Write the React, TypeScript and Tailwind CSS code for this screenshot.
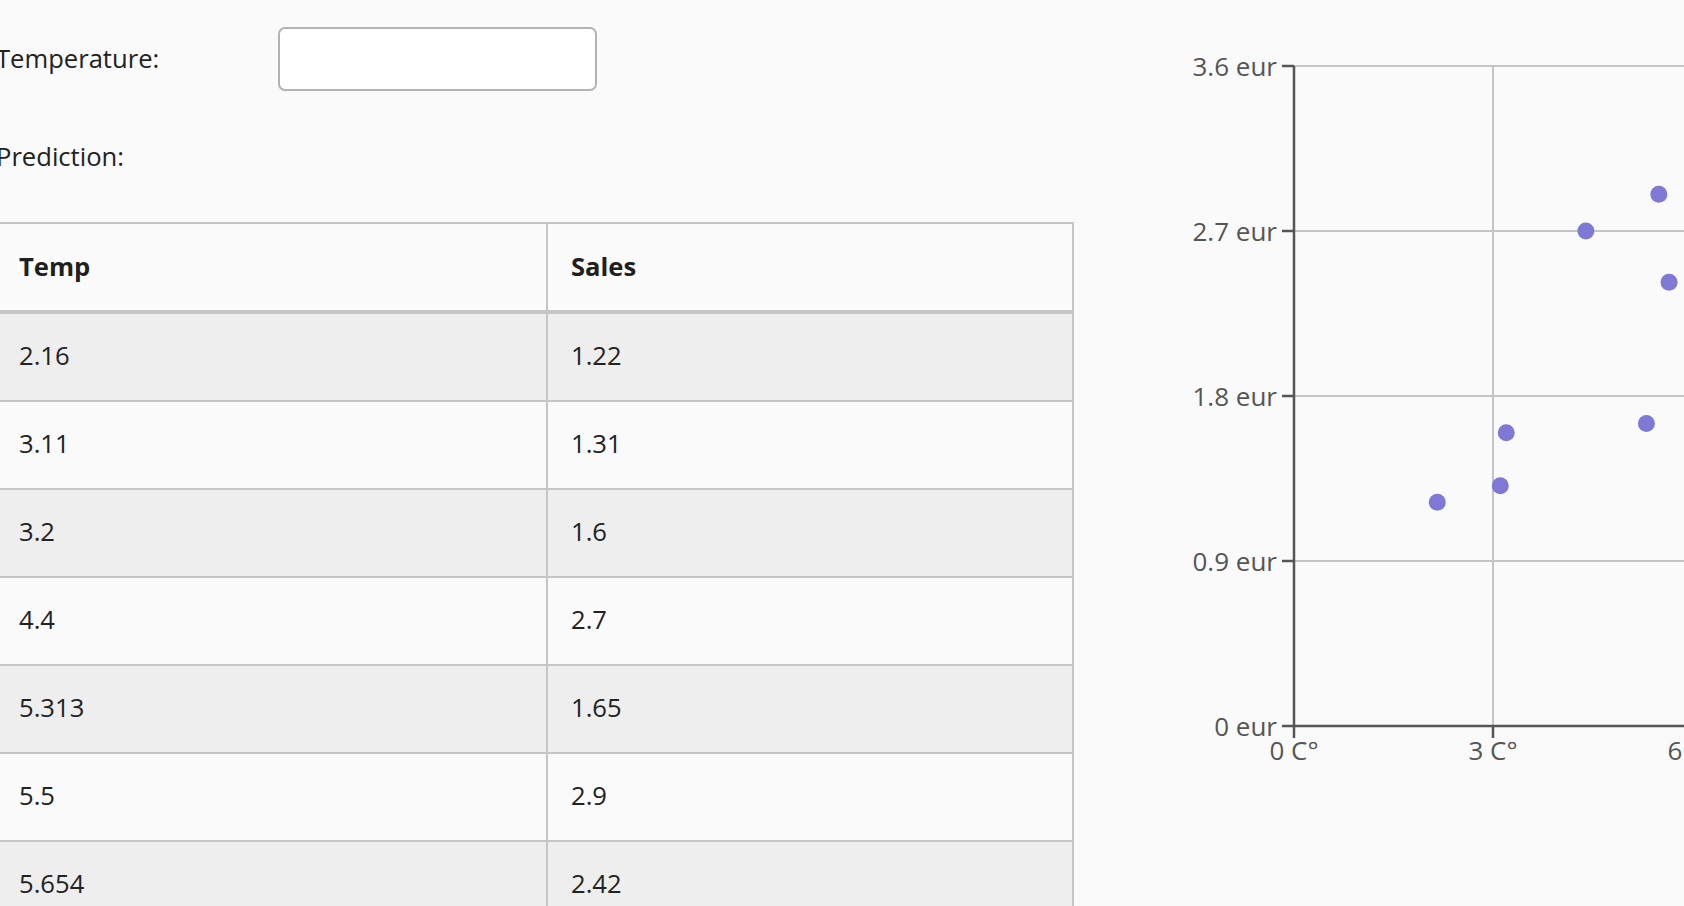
import React from "react";

const rows: [string, string][] = [
	["2.16", "1.22"],
	["3.11", "1.31"],
	["3.2", "1.6"],
	["4.4", "2.7"],
	["5.313", "1.65"],
	["5.5", "2.9"],
	["5.654", "2.42"],
];

// chart mapping in page coordinates
const X0 = 1294;
const Y0 = 726;
const xPx = (t: number) => X0 + t * (199 / 3);
const yPx = (s: number) => Y0 - s * (660 / 3.6);

function Chart() {
	const yTicks = [0, 0.9, 1.8, 2.7, 3.6];
	const xTicks = [0, 3, 6];
	return (
		<svg
			className="ml-auto shrink-0 block"
			width={534}
			height={906}
			viewBox="1150 0 534 906"
		>
			{yTicks.slice(1).map((v) => (
				<line
					key={"gy" + v}
					x1={X0}
					x2={1700}
					y1={yPx(v)}
					y2={yPx(v)}
					stroke="#c4c4c4"
					strokeWidth={2}
				/>
			))}
			{xTicks.slice(1).map((v) => (
				<line
					key={"gx" + v}
					x1={xPx(v)}
					x2={xPx(v)}
					y1={yPx(3.6)}
					y2={Y0}
					stroke="#c4c4c4"
					strokeWidth={2}
				/>
			))}
			<line x1={X0} x2={X0} y1={yPx(3.6)} y2={Y0} stroke="#555" strokeWidth={2.5} />
			<line x1={X0} x2={1700} y1={Y0} y2={Y0} stroke="#555" strokeWidth={2.5} />
			{yTicks.map((v) => (
				<g key={"ty" + v}>
					<line x1={X0 - 12} x2={X0} y1={yPx(v)} y2={yPx(v)} stroke="#555" strokeWidth={2.5} />
					<text
						x={1277}
						y={yPx(v)}
						textAnchor="end"
						dominantBaseline="central"
						fontSize={26}
						fill="#555"
						fontFamily="'Open Sans', sans-serif"
					>
						{v} eur
					</text>
				</g>
			))}
			{xTicks.map((v) => (
				<g key={"tx" + v}>
					<line x1={xPx(v)} x2={xPx(v)} y1={Y0} y2={Y0 + 12} stroke="#555" strokeWidth={2.5} />
					<text
						x={xPx(v)}
						y={760}
						textAnchor="middle"
						fontSize={26}
						fill="#555"
						fontFamily="'Open Sans', sans-serif"
					>
						{v} C°
					</text>
				</g>
			))}
			{rows.map(([t, s]) => (
				<circle key={t} cx={xPx(Number(t))} cy={yPx(Number(s))} r={8.5} fill="#7f78d5" />
			))}
		</svg>
	);
}

export default function App() {
	return (
		<div className="h-[906px] bg-[#fafafa] overflow-hidden flex font-['Open_Sans',sans-serif] text-[25.6px] text-[#222]">
			<div className="-ml-[4px] w-[1078px] shrink-0 pt-[27px]">
				<div className="flex items-center h-[64px]">
					<label className="w-[282px] shrink-0">Temperature:</label>
					<input
						type="text"
						className="w-[319px] h-[64px] border-2 border-[#b3b3b3] rounded-[7px] bg-white outline-none px-3"
					/>
				</div>
				<div className="mt-[48px] h-[36px] leading-[36px]">Prediction:</div>
				<div className="mt-[47px] border-2 border-b-0 border-[#c6c6c6] bg-[#fbfbfb]">
					<div className="flex h-[90px] border-b-4 border-[#c6c6c6] font-bold text-[#1f1f1f]">
						<div className="w-[550px] border-r-2 border-[#c6c6c6] px-[21px] flex items-center">Temp</div>
						<div className="flex-1 px-[23px] flex items-center">Sales</div>
					</div>
					{rows.map(([t, s], i) => (
						<div
							key={t}
							className={
								"flex h-[88px] border-b-2 border-[#c6c6c6] " +
								(i % 2 === 0 ? "bg-[#eeeeee]" : "bg-[#fafafa]")
							}
						>
							<div className="w-[550px] border-r-2 border-[#c6c6c6] px-[21px] flex items-center pb-[2px]">{t}</div>
							<div className="flex-1 px-[23px] flex items-center pb-[2px]">{s}</div>
						</div>
					))}
				</div>
			</div>
			<Chart />
		</div>
	);
}
